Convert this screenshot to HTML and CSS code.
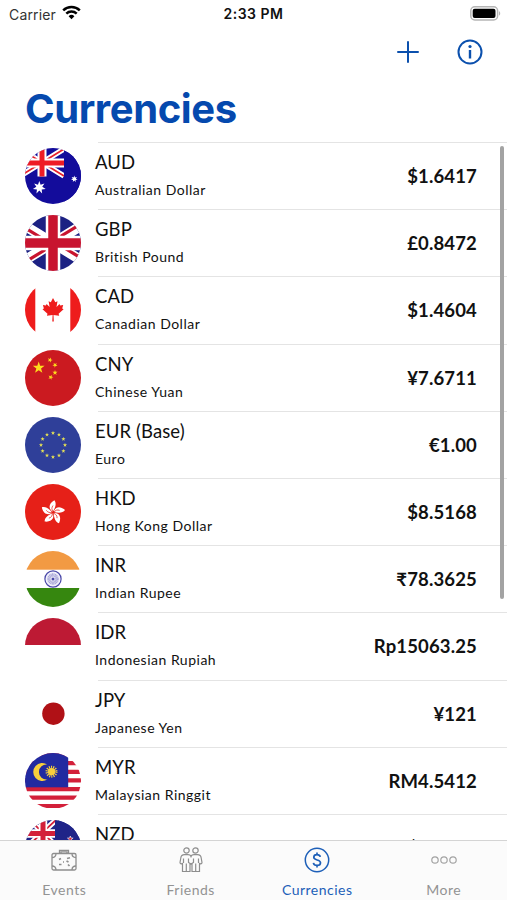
FILE: index.html
```
<!DOCTYPE html>
<html lang="en">
<head>
    <meta charset="UTF-8">
    <meta name="viewport" content="width=device-width, initial-scale=1.0">
    <title>Currencies</title>
    <link rel="stylesheet" href="styles.css">
</head>
<body>
    <!-- Shared flag parts -->
    <svg class="defs" width="0" height="0">
        <defs>
            <polygon id="star5" points="0,-10 2.3,-3.2 9.5,-3.1 3.8,1.2 5.9,8.1 0,4 -5.9,8.1 -3.8,1.2 -9.5,-3.1 -2.3,-3.2"/>
            <polygon id="star7" points="0,-10 2,-4.1 7.8,-6.2 4.5,-1 9.7,2.2 3.6,2.9 4.3,9 0,4.6 -4.3,9 -3.6,2.9 -9.7,2.2 -4.5,-1 -7.8,-6.2 -2,-4.1"/>
            <path id="petal" d="M0-1C-4-3-4.500-9 2.500-12C4.500-9 3-5 0-1Z"/>
        </defs>
    </svg>

    <div class="status-bar">
        <div class="carrier">
            <span>Carrier</span>
            <svg width="19" height="15" viewBox="0 0 19 15" fill="none" stroke="#000" stroke-width="2.500">
                <path d="M1.200 5.300a12 12 0 0 1 16.600 0"/>
                <path d="M4.300 8.700a7.500 7.500 0 0 1 10.400 0"/>
                <path d="M9.500 14.200l-2.900-3a4.200 4.200 0 0 1 5.800 0z" fill="#000" stroke="none"/>
            </svg>
        </div>
        <div class="time">2:33 PM</div>
        <svg class="battery" width="31" height="15" viewBox="0 0 31 15">
            <rect x="0.800" y="0.800" width="26.800" height="13.200" rx="4" fill="#fff" stroke="#b5b5b5" stroke-width="1.500"/>
            <rect x="2.700" y="2.700" width="22.800" height="9.400" rx="2" fill="#000"/>
            <path d="M29 5.200c1.600.6 1.600 3.800 0 4.400z" fill="#b5b5b5"/>
        </svg>
    </div>

    <div class="nav-bar">
        <svg width="24" height="24" viewBox="0 0 24 24" fill="none" stroke="#0b50ad" stroke-width="2" stroke-linecap="round">
            <path d="M12 2v20M2 12h20"/>
        </svg>
        <svg width="26" height="26" viewBox="0 0 26 26" fill="none" stroke="#0b50ad" stroke-width="2">
            <circle cx="13" cy="13" r="11.500"/>
            <path d="M13 11v8.500" stroke-width="2.400"/>
            <circle cx="13" cy="7.500" r="1.600" fill="#0b50ad" stroke="none"/>
        </svg>
    </div>

    <h1>Currencies</h1>

    <div class="list">
        <div class="row">
            <svg class="flag" viewBox="0 0 56 56">
                <rect width="56" height="56" fill="#130c9b"/>
                <path d="M-5 1L39 28M39 1L-5 28" stroke="#fff" stroke-width="5.500"/>
                <path d="M-5 1L39 28M39 1L-5 28" stroke="#e8212b" stroke-width="1.800"/>
                <rect x="39" width="17" height="56" fill="#130c9b"/>
                <path d="M17 0v28.500M-5 15h44" stroke="#fff" stroke-width="9"/>
                <path d="M17 0v28.500M-5 15h44" stroke="#ee1c25" stroke-width="5"/>
                <use href="#star7" transform="translate(14.300 39.500) scale(.66)" fill="#fff"/>
                <use href="#star7" transform="translate(49.300 31) scale(.34)" fill="#fff"/>
            </svg>
            <div class="names"><div class="code">AUD</div><div class="name">Australian Dollar</div></div>
            <div class="rate">$1.6417</div>
        </div>
        <div class="row">
            <svg class="flag" viewBox="0 0 56 56">
                <rect width="56" height="56" fill="#1c2183"/>
                <path d="M-18 0L74 56M74 0L-18 56" stroke="#fff" stroke-width="10"/>
                <path d="M-18 2L28 30M28 26L74 54M74-2L28 26M28 30L-18 58" stroke="#c8142f" stroke-width="3.200"/>
                <path d="M28 0v56M0 28h56" stroke="#fff" stroke-width="14.500"/>
                <path d="M28 0v56M0 28h56" stroke="#c8142f" stroke-width="9.500"/>
            </svg>
            <div class="names"><div class="code">GBP</div><div class="name">British Pound</div></div>
            <div class="rate">£0.8472</div>
        </div>
        <div class="row">
            <svg class="flag" viewBox="0 0 56 56">
                <rect width="56" height="56" fill="#fff"/>
                <path d="M0 0h10.300v56H0zM45.300 0H56v56H45.300z" fill="#ee1c1c"/>
                <path d="M28 16l2.300 4.300 2.200-1-1 5.600 3-2.800.7 1.500 3-.5-1 3.400 1.400.8-5 4.500.6 2-5.700-.8.300 6.500h-1.500l.3-6.500-5.700.8.600-2-5-4.500 1.400-.8-1-3.400 3 .5.700-1.500 3 2.800-1-5.600 2.200 1z" fill="#ee1c1c"/>
            </svg>
            <div class="names"><div class="code">CAD</div><div class="name">Canadian Dollar</div></div>
            <div class="rate">$1.4604</div>
        </div>
        <div class="row">
            <svg class="flag" viewBox="0 0 56 56">
                <rect width="56" height="56" fill="#cb1a20"/>
                <g fill="#fddc1c">
                    <use href="#star5" transform="translate(13.700 17.700) scale(.62)"/>
                    <use href="#star5" transform="translate(25 10) rotate(20) scale(.27)"/>
                    <use href="#star5" transform="translate(30 15) rotate(40) scale(.27)"/>
                    <use href="#star5" transform="translate(30 22.700) scale(.27)"/>
                    <use href="#star5" transform="translate(25.700 27.200) rotate(20) scale(.27)"/>
                </g>
            </svg>
            <div class="names"><div class="code">CNY</div><div class="name">Chinese Yuan</div></div>
            <div class="rate">¥7.6711</div>
        </div>
        <div class="row">
            <svg class="flag" viewBox="0 0 56 56">
                <rect width="56" height="56" fill="#2f3f99"/>
                <g fill="#e3df55">
                    <use href="#star5" transform="translate(28 16) scale(.22)"/>
                    <use href="#star5" transform="translate(34 17.600) scale(.22)"/>
                    <use href="#star5" transform="translate(38.400 22) scale(.22)"/>
                    <use href="#star5" transform="translate(40 28) scale(.22)"/>
                    <use href="#star5" transform="translate(38.400 34) scale(.22)"/>
                    <use href="#star5" transform="translate(34 38.400) scale(.22)"/>
                    <use href="#star5" transform="translate(28 40) scale(.22)"/>
                    <use href="#star5" transform="translate(22 38.400) scale(.22)"/>
                    <use href="#star5" transform="translate(17.600 34) scale(.22)"/>
                    <use href="#star5" transform="translate(16 28) scale(.22)"/>
                    <use href="#star5" transform="translate(17.600 22) scale(.22)"/>
                    <use href="#star5" transform="translate(22 17.600) scale(.22)"/>
                </g>
            </svg>
            <div class="names"><div class="code">EUR (Base)</div><div class="name">Euro</div></div>
            <div class="rate">€1.00</div>
        </div>
        <div class="row">
            <svg class="flag" viewBox="0 0 56 56">
                <rect width="56" height="56" fill="#e62018"/>
                <g fill="#fff" transform="translate(28 28.500)">
                    <use href="#petal" transform="rotate(-5)"/>
                    <use href="#petal" transform="rotate(67)"/>
                    <use href="#petal" transform="rotate(139)"/>
                    <use href="#petal" transform="rotate(211)"/>
                    <use href="#petal" transform="rotate(283)"/>
                </g>
                <g fill="none" stroke="#e62018" stroke-width=".7" transform="translate(28 28.500)">
                    <path id="vein" d="M0-1C-1.500-3-1.500-5 0-7"/>
                    <use href="#vein" transform="rotate(72)"/>
                    <use href="#vein" transform="rotate(144)"/>
                    <use href="#vein" transform="rotate(216)"/>
                    <use href="#vein" transform="rotate(288)"/>
                </g>
            </svg>
            <div class="names"><div class="code">HKD</div><div class="name">Hong Kong Dollar</div></div>
            <div class="rate">$8.5168</div>
        </div>
        <div class="row">
            <svg class="flag" viewBox="0 0 56 56">
                <rect width="56" height="56" fill="#fff"/>
                <rect width="56" height="18.700" fill="#f29a43"/>
                <rect y="37" width="56" height="19" fill="#36870f"/>
                <circle cx="28" cy="28" r="8.100" fill="#f1f0fb" stroke="#4a48a8" stroke-width="1.200"/>
                <circle cx="28" cy="28" r="4" fill="none" stroke="#aaa8d8" stroke-width="3.500" stroke-dasharray=".9 .35"/>
                <circle cx="28" cy="28" r="1.500" fill="#4a48a8"/>
            </svg>
            <div class="names"><div class="code">INR</div><div class="name">Indian Rupee</div></div>
            <div class="rate">₹78.3625</div>
        </div>
        <div class="row">
            <svg class="flag" viewBox="0 0 56 56">
                <rect width="56" height="56" fill="#fff"/>
                <rect width="56" height="27" fill="#bd1a34"/>
            </svg>
            <div class="names"><div class="code">IDR</div><div class="name">Indonesian Rupiah</div></div>
            <div class="rate">Rp15063.25</div>
        </div>
        <div class="row">
            <svg class="flag" viewBox="0 0 56 56">
                <rect width="56" height="56" fill="#fff"/>
                <circle cx="28.400" cy="27.700" r="11.200" fill="#b01116"/>
            </svg>
            <div class="names"><div class="code">JPY</div><div class="name">Japanese Yen</div></div>
            <div class="rate">¥121</div>
        </div>
        <div class="row">
            <svg class="flag" viewBox="0 0 56 56">
                <rect width="56" height="56" fill="#fff"/>
                <path d="M0 1.700h56M0 10.200h56M0 18.800h56M0 27.400h56M0 36.200h56M0 44.600h56M0 53h56" stroke="#d3203a" stroke-width="4.200"/>
                <rect width="43.200" height="34.300" fill="#222aa0"/>
                <path d="M22.500 11.700a9 9 0 1 0 0 14.600a7.400 7.400 0 1 1 0-14.600z" fill="#f8cf3c"/>
                <circle cx="26.500" cy="18.700" r="3.600" fill="#f8cf3c"/>
                <circle cx="26.500" cy="18.700" r="4.500" fill="none" stroke="#f8cf3c" stroke-width="3" stroke-dasharray="1 1.020"/>
            </svg>
            <div class="names"><div class="code">MYR</div><div class="name">Malaysian Ringgit</div></div>
            <div class="rate">RM4.5412</div>
        </div>
        <div class="row last">
            <svg class="flag" viewBox="0 0 56 56">
                <rect width="56" height="56" fill="#1f2488"/>
                <path d="M4-1L32 27M32-1L2 27" stroke="#fff" stroke-width="5.500"/>
                <path d="M4-1L32 27M32-1L2 27" stroke="#d3203a" stroke-width="1.800"/>
                <rect x="30" width="26" height="56" fill="#1f2488"/>
                <path d="M18 0v28M0 13.500h30" stroke="#fff" stroke-width="8.500"/>
                <path d="M18 0v28M0 13.500h30" stroke="#d3203a" stroke-width="5"/>
                <use href="#star5" transform="translate(45.300 19) scale(.3)" fill="#d3203a" stroke="#fff" stroke-width="2"/>
            </svg>
            <div class="names"><div class="code">NZD</div></div>
            <div class="rate">$1.7408</div>
        </div>
    </div>
    <div class="scroll-thumb"></div>

    <div class="tab-bar">
        <div class="tab">
            <svg width="28" height="28" viewBox="0 0 28 28" fill="none" stroke="#8e8e8e" stroke-width="1.300">
                <rect x="2" y="7.500" width="24" height="16.500" rx="1.500"/>
                <path d="M9.500 7.500V4.300h9v3.200M11 7.500V5.800h6v1.700"/>
                <path d="M2 11.500c2.500 0 4-1.500 4-4M26 11.500c-2.500 0-4-1.500-4-4M2 20c2.500 0 4 1.500 4 4M26 20c-2.500 0-4 1.500-4 4"/>
                <path d="M9 13.500l2-1M17 12.500l3-.8M16.500 15l2 1M9 18.500h2.500M18 18.500l1.500 1.500M13 16h1" stroke-width="1.700"/>
            </svg>
            <span>Events</span>
        </div>
        <div class="tab">
            <svg width="28" height="28" viewBox="0 0 28 28" fill="none" stroke="#8e8e8e" stroke-width="1.200">
                <circle cx="9.500" cy="4.500" r="2.700"/>
                <circle cx="18.500" cy="4.500" r="2.700"/>
                <path d="M14 10.500c-.5-1.300-1.500-1.800-3-1.800H7.500c-2.500 0-3.500 1.300-3.700 3.300L3 16.500c0 1.500 2 1.800 2.500.5V25.500H13V18h2v7.500h7.500V17c.5 1.300 2.500 1 2.500-.5l-.8-4.500c-.2-2-1.200-3.300-3.700-3.300H17c-1.500 0-2.500.5-3 1.800z"/>
                <path d="M6.500 12.500v4.500M21.500 12.500v4.500M9.300 17.500v8M18.700 17.500v8M11.500 12.500v4l2.500 1.500 2.500-1.500v-4"/>
            </svg>
            <span>Friends</span>
        </div>
        <div class="tab active">
            <svg width="28" height="28" viewBox="0 0 28 28" fill="none" stroke="#1d5fb8" stroke-width="1.500">
                <circle cx="14" cy="14" r="11.700"/>
                <path d="M17.300 10.900c-.4-1.500-1.700-2.200-3.300-2.200-1.800 0-3.200 1-3.200 2.600 0 3.600 6.700 1.700 6.700 5.400 0 1.700-1.500 2.700-3.400 2.700-2 0-3.400-.9-3.700-2.600M14 6.500v2.200M14 19.400v2.200" stroke-width="1.700"/>
            </svg>
            <span>Currencies</span>
        </div>
        <div class="tab">
            <svg width="28" height="28" viewBox="0 0 28 28" fill="none" stroke="#a3a3a3" stroke-width="1.200">
                <circle cx="5" cy="14" r="3.200"/>
                <circle cx="14" cy="14" r="3.200"/>
                <circle cx="23" cy="14" r="3.200"/>
            </svg>
            <span>More</span>
        </div>
    </div>
</body>
</html>
```
FILE: styles.css
```
* {
    box-sizing: border-box;
}

body {
    display: flex;
    flex-direction: column;
    width: 507px;
    height: 900px;
    margin: 0;
    overflow: hidden;
    position: relative;
    background-color: #fff;
    color: #111;
    font-family: Lato, "Liberation Sans", sans-serif;
}

svg {
    display: block;
    flex-shrink: 0;
}

.defs {
    position: absolute;
}

.status-bar {
    display: grid;
    grid-template-columns: 1fr auto 1fr;
    align-items: center;
    height: 28px;
    padding: 0 6px 0 9px;
    font-family: Inter, sans-serif;
    font-size: 14px;
}

.carrier {
    display: flex;
    align-items: center;
    gap: 6px;
    color: #333;
    letter-spacing: 0.15px;
}

.carrier svg {
    margin-top: -3px;
}

.time {
    margin-top: -1px;
    padding-right: 3px;
    font-weight: 600;
    letter-spacing: 0.5px;
}

.battery {
    justify-self: end;
    margin-top: -1px;
}

.nav-bar {
    display: flex;
    justify-content: flex-end;
    align-items: center;
    gap: 37px;
    height: 48px;
    padding-right: 24px;
}

h1 {
    height: 66px;
    margin: 0;
    padding-left: 25px;
    font-family: Inter, sans-serif;
    font-size: 40px;
    font-weight: 700;
    line-height: 66px;
    letter-spacing: -0.4px;
    color: #0549ae;
}

.list {
    flex: 1;
    min-height: 0;
    overflow: hidden;
}

.row {
    display: flex;
    align-items: center;
    height: 67.2px;
    padding: 1px 30px 0 25px;
    background: linear-gradient(#e4e4e4, #e4e4e4) 98px 0 / 409px 1px no-repeat;
}

.flag {
    width: 56px;
    height: 56px;
    border-radius: 50%;
}

.names {
    flex: 1;
    padding-left: 14px;
}

.code {
    font-size: 18.5px;
    line-height: 26px;
    letter-spacing: 0.1px;
}

.name {
    margin-top: 2px;
    font-size: 14px;
    line-height: 26px;
    letter-spacing: 0.5px;
}

.rate {
    font-size: 18.5px;
    font-weight: 700;
    letter-spacing: 0.15px;
}

/* last row runs under the tab bar */
.last .names {
    align-self: flex-start;
    padding-top: 6px;
}

.scroll-thumb {
    position: absolute;
    top: 146px;
    right: 3px;
    width: 4px;
    height: 453px;
    border-radius: 2px;
    background-color: #a3a3a3;
}

.tab-bar {
    display: flex;
    height: 60px;
    padding-left: 1px;
    border-top: 1px solid #d4d4d4;
    background-color: #fbfbfb;
}

.tab {
    display: flex;
    flex: 1;
    flex-direction: column;
    align-items: center;
    padding-top: 5px;
    font-size: 14px;
    line-height: 20px;
    letter-spacing: 0.5px;
    color: #939393;
}

.tab span {
    margin-top: 6px;
}

.tab.active {
    color: #1d5fb8;
}
```
